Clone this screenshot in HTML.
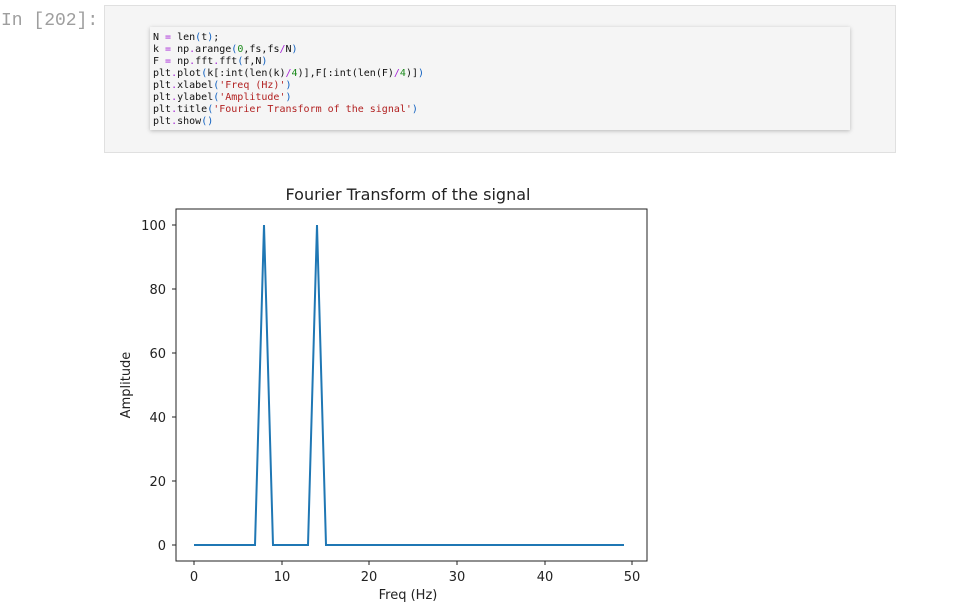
<!DOCTYPE html>
<html><head><style>
body{margin:0;width:979px;height:605px;background:#fff;position:relative;overflow:hidden;font-family:"Liberation Sans",sans-serif}
.prompt{position:absolute;left:1px;top:11px;font:18px "Liberation Mono",monospace;color:#9e9e9e}
.outer{position:absolute;left:104px;top:5px;width:790px;height:146px;background:#f5f5f5;border:1px solid #e0e0e0}
.inner{position:absolute;left:150px;top:27px;width:700px;height:103px;background:#f5f5f5;box-shadow:0 1px 4px rgba(0,0,0,.25)}
pre{margin:0;position:absolute;left:3px;top:5px;font:10px/12px "DejaVu Sans Mono","Liberation Mono",monospace;color:#111}
.o{color:#a626d6}.s{color:#b22222}.n{color:#1a8a1a}.p{color:#1060c0}
</style></head><body>
<div class="prompt">In [202]:</div>
<div class="outer"></div>
<div class="inner"><pre>N <span class="o">=</span> len<span class="p">(</span>t<span class="p">)</span>;
k <span class="o">=</span> np<span class="o">.</span>arange<span class="p">(</span><span class="n">0</span>,fs,fs<span class="o">/</span>N<span class="p">)</span>
F <span class="o">=</span> np<span class="o">.</span>fft<span class="o">.</span>fft<span class="p">(</span>f,N<span class="p">)</span>
plt<span class="o">.</span>plot<span class="p">(</span>k[:int(len(k)<span class="o">/</span><span class="n">4</span>)],F[:int(len(F)<span class="o">/</span><span class="n">4</span>)]<span class="p">)</span>
plt<span class="o">.</span>xlabel<span class="p">(</span><span class="s">'Freq (Hz)'</span><span class="p">)</span>
plt<span class="o">.</span>ylabel<span class="p">(</span><span class="s">'Amplitude'</span><span class="p">)</span>
plt<span class="o">.</span>title<span class="p">(</span><span class="s">'Fourier Transform of the signal'</span><span class="p">)</span>
plt<span class="o">.</span>show<span class="p">()</span></pre></div>
<svg width="979" height="605" style="position:absolute;left:0;top:0" font-family="DejaVu Sans, sans-serif" font-size="13" fill="#222">
<text x="408" y="200" text-anchor="middle" font-size="16">Fourier Transform of the signal</text>
<rect x="176" y="209" width="471" height="352" fill="none" stroke="#222" stroke-width="1"/>
<polyline fill="none" stroke="#1f77b4" stroke-width="2" points="194,545 255,545 264,225 273,545 308,545 317,225 326,545 624,545"/>
<g stroke="#222">
<line x1="194" y1="561" x2="194" y2="565"/><line x1="282" y1="561" x2="282" y2="565"/><line x1="369" y1="561" x2="369" y2="565"/><line x1="457" y1="561" x2="457" y2="565"/><line x1="545" y1="561" x2="545" y2="565"/><line x1="632" y1="561" x2="632" y2="565"/>
<line x1="172" y1="545" x2="176" y2="545"/><line x1="172" y1="481" x2="176" y2="481"/><line x1="172" y1="417" x2="176" y2="417"/><line x1="172" y1="353" x2="176" y2="353"/><line x1="172" y1="289" x2="176" y2="289"/><line x1="172" y1="225" x2="176" y2="225"/>
</g>
<g text-anchor="middle"><text x="194" y="581">0</text><text x="282" y="581">10</text><text x="369" y="581">20</text><text x="457" y="581">30</text><text x="545" y="581">40</text><text x="632" y="581">50</text>
<text x="408" y="599">Freq (Hz)</text></g>
<g text-anchor="end"><text x="166" y="550">0</text><text x="166" y="486">20</text><text x="166" y="422">40</text><text x="166" y="358">60</text><text x="166" y="294">80</text><text x="166" y="230">100</text></g>
<text transform="translate(130,385) rotate(-90)" text-anchor="middle">Amplitude</text>
</svg>
</body></html>
